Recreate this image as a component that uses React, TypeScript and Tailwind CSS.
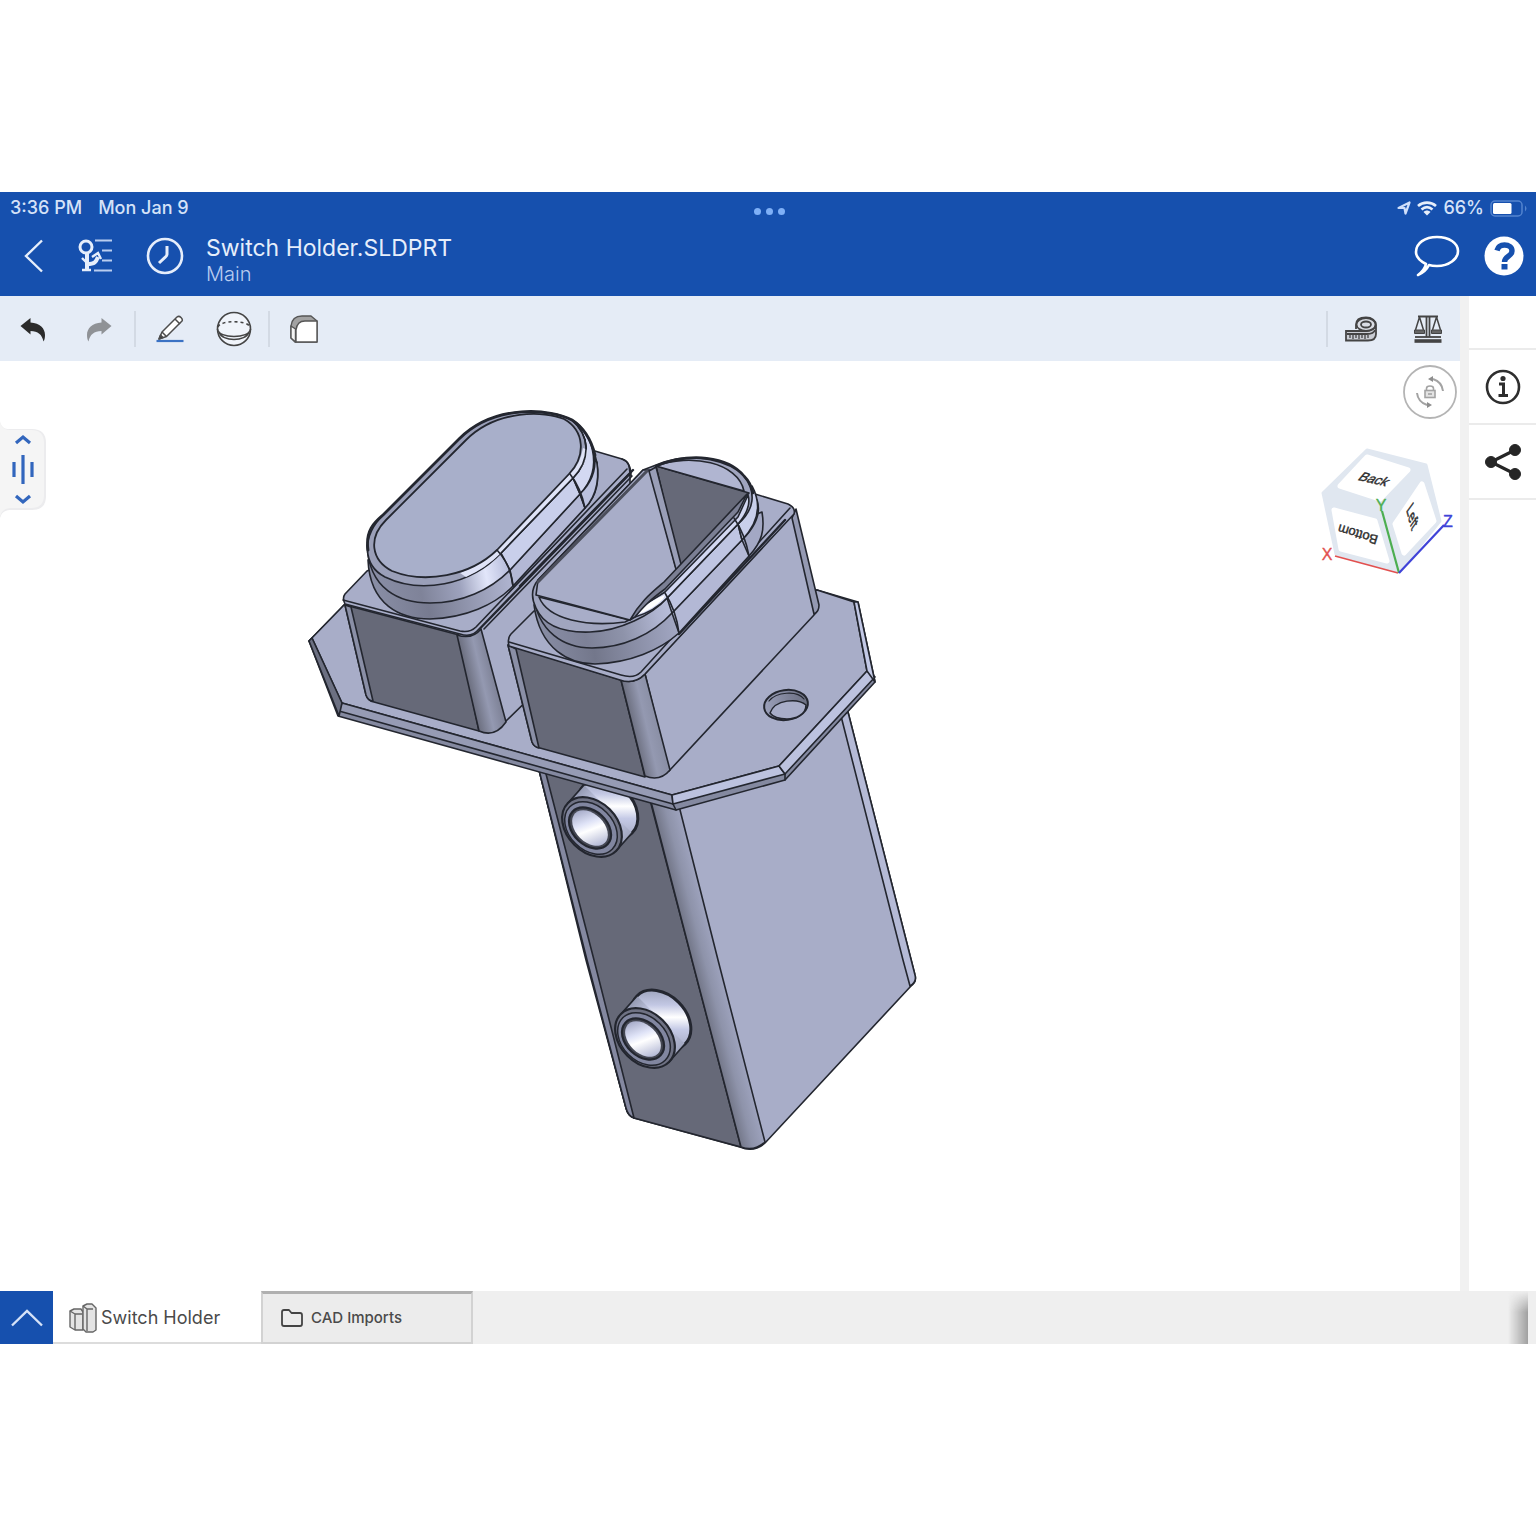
import * as React from "react";

const EDGE = "#23262f";

// ─── Header icons ─────────────────────────────────────────────────────────────
function BackIcon() {
    return (
        <svg width="20" height="34" viewBox="0 0 20 34" fill="none" stroke="#e6eefb" strokeWidth="2.4">
            <path d="M18 1.500L2 17L18 32.500" />
        </svg>
    );
}

function FeatureTreeIcon() {
    return (
        <svg width="36" height="34" viewBox="0 0 36 34" fill="none" stroke="#e6eefb">
            <circle cx="8" cy="8" r="6" strokeWidth="3" />
            <path d="M9 14V31M9 25C17 25 18 23 20 18" strokeWidth="4" />
            <path d="M4 19L9 24M14 18L20 14L23 20M4 31H13" strokeWidth="2.400" />
            <path d="M17 1.500H34M24 11.500H34M24 21.500H34M16 31.500H34" strokeWidth="1.800" stroke="#b9cdf0" />
        </svg>
    );
}

function HistoryIcon() {
    return (
        <svg width="38" height="38" viewBox="0 0 38 38" fill="none" stroke="#e6eefb" strokeWidth="2.6">
            <circle cx="19" cy="19" r="17" />
            <path d="M21 9V17Q21 19 19.500 20L13 26" strokeWidth="3" />
        </svg>
    );
}

function CommentIcon() {
    return (
        <svg width="46" height="42" viewBox="0 0 46 42" fill="none" stroke="#fff" strokeWidth="2.6" strokeLinejoin="round">
            <path d="M4 40C8 37 11 34 12 29C6 26 2 22 2 17C2 8 11 2 23 2S44 8 44 16S35 31 23 31C20 31 18 31 15 30C13 34 9 38 4 40Z" />
        </svg>
    );
}

function HelpIcon() {
    return (
        <svg width="40" height="40" viewBox="0 0 40 40">
            <circle cx="20" cy="20" r="19.500" fill="#fff" />
            <path d="M13 14.500C14 10.500 17 9 20.500 9C25 9 28 11.500 28 15C28 20.500 20.500 20 20.500 26" fill="none" stroke="#1650ae" strokeWidth="5.400" />
            <rect x="17.500" y="28" width="6" height="5.500" fill="#1650ae" />
        </svg>
    );
}

function LocationIcon() {
    return (
        <svg width="14" height="14" viewBox="0 0 14 14" fill="none" stroke="#cfdefa" strokeWidth="2.200" strokeLinejoin="round">
            <path d="M1.500 7L12.500 1.500L8.500 12.500L7.500 7Z" />
        </svg>
    );
}

function WifiIcon() {
    return (
        <svg width="20" height="15" viewBox="0 0 20 15" fill="none" stroke="#e6eefb" strokeWidth="2.600">
            <path d="M1 5C6 0.500 14 0.500 19 5M4.500 8.500C8 5.500 12 5.500 15.500 8.500" />
            <path d="M6.500 11C8.500 9 11.500 9 13.500 11L10 14.500Z" fill="#e6eefb" stroke="none" />
        </svg>
    );
}

function BatteryIcon() {
    return (
        <svg width="38" height="17" viewBox="0 0 38 17">
            <rect x="1" y="1" width="31" height="15" rx="4" fill="none" stroke="#5484cf" strokeWidth="1.500" />
            <rect x="3" y="3" width="18.500" height="11" rx="1.500" fill="#fff" />
            <path d="M35 5.500Q38 8.500 35 11.500Z" fill="#5484cf" />
        </svg>
    );
}

// ─── Toolbar icons ────────────────────────────────────────────────────────────
function UndoIcon({ color }: { color: string }) {
    return (
        <svg width="26" height="26" viewBox="0 0 26 26" fill={color}>
            <path d="M0.500 10L10.500 2V6.500C20 7 25 12.500 25 19C25 22 24.500 24 23.500 25.500C22 18.500 18 15 10.500 15V18.500Z" />
        </svg>
    );
}

function SketchIcon() {
    return (
        <svg width="28" height="28" viewBox="0 0 28 28" fill="none" stroke="#4d4d4d" strokeWidth="1.500" strokeLinejoin="round">
            <path d="M3 24L6 17L21 2Q23 0.500 25 2.500T26 6L10.500 21.500Z" fill="#fff" />
            <path d="M6 17L10.500 21.500M19 4L24 9" />
            <path d="M3 24L4.500 20L7 22.500Z" fill="#333" />
            <path d="M0.500 26H27.500" stroke="#3b72c4" strokeWidth="2.200" />
        </svg>
    );
}

function SphereIcon() {
    return (
        <svg width="36" height="36" viewBox="0 0 36 36" fill="none" stroke="#454545" strokeWidth="1.600">
            <circle cx="18" cy="18" r="16.500" fill="#f0f4fa" />
            <path d="M1.500 18C2 28 34 28 34.500 18M3 21C6 31 30 31 33 21" />
            <path d="M2 16C4 9 32 9 34 16" strokeDasharray="3 3" />
        </svg>
    );
}

function SheetIcon() {
    return (
        <svg width="28" height="28" viewBox="0 0 28 28" stroke="#555" strokeWidth="1.400" strokeLinejoin="round">
            <path d="M1 11Q2 1 12 1H21L27 6V27H5L1 23Z" fill="#a2a2a2" />
            <path d="M1 11L5.500 14V27L1 23Z" fill="#f4f4f4" />
            <path d="M6 27V15Q7 6 15 6H27V27Z" fill="#fff" />
        </svg>
    );
}

function TapeIcon() {
    return (
        <svg width="34" height="26" viewBox="0 0 34 26" fill="none" stroke="#444" strokeWidth="1.800">
            <path d="M12 13V9C12 4 16 1.500 22 1.500S32 5 32 9V18C32 22 29 24.500 24 24.500H2V15H22C27 15 32 12 32 9" fill="#c9ccd3" />
            <ellipse cx="22" cy="8.500" rx="9.500" ry="6.500" fill="#d9dce3" />
            <ellipse cx="22" cy="8.500" rx="5" ry="3" />
            <path d="M3 18H23C27 18 30 17 31 14" />
            <path d="M6 19V22M9 19V23M12 19V22M15 19V23M18 19V22M21 19V23M24 19V22" strokeWidth="1.300" />
        </svg>
    );
}

function ScaleIcon() {
    return (
        <svg width="28" height="28" viewBox="0 0 28 28" fill="none" stroke="#444" strokeWidth="1.500">
            <path d="M4 1.500H24M12.500 1V22M15.500 1V22" strokeWidth="1.800" />
            <path d="M5.500 2L1.500 15M5.500 2L9.500 15M22.500 2L18.500 15M22.500 2L26.500 15" />
            <path d="M0.500 15H10.500V18.500H0.500ZM17.500 15H27.500V18.500H17.500Z" fill="#666" strokeWidth="1" />
            <path d="M1 22H27" strokeWidth="1.800" />
            <path d="M0.500 26H27.500" strokeWidth="3.600" />
        </svg>
    );
}

// ─── Canvas widgets ───────────────────────────────────────────────────────────
function RotateLockIcon() {
    return (
        <svg width="54" height="54" viewBox="0 0 54 54" fill="none" stroke="#a3a3a3" strokeWidth="1.600">
            <circle cx="27" cy="27" r="26" fill="#fff" stroke="#b4b4b4" strokeWidth="1.800" />
            <path d="M30 14Q39 17 40 26M14 28Q15 37 24 40" strokeWidth="2" />
            <path d="M25 14L30 11V17ZM29 40L24 37V43Z" fill="#8e8e8e" stroke="none" />
            <path d="M23.500 26V23.500Q23.500 21 27 21T30.500 23.500V26" />
            <rect x="22" y="25.500" width="10" height="7" fill="#e4e4e4" />
            <path d="M25 29H29" />
        </svg>
    );
}

function ViewCube() {
    return (
        <svg
            width="144" height="138" viewBox="1316 444 144 138"
            fontFamily='"Liberation Sans", Arial, sans-serif'
            strokeLinejoin="round"
        >
            <path d="M1367 450L1426 465L1440 521L1399 572L1336 554L1323 493Z" fill="#e0e7f0" stroke="#e0e7f0" strokeWidth="3" />
            <g fill="#fff" stroke="#fff" strokeWidth="5">
                <path d="M1367 457L1408 470L1380 499L1340 486Z" />
                <path d="M1334 510L1375 521L1387 561L1341 549Z" />
                <path d="M1422 484L1434 521L1404 553L1395 524Z" />
            </g>
            <g fill="#2e2e2e" stroke="#2e2e2e" strokeWidth="0.400" fontSize="13">
                <text transform="translate(1371 483) rotate(13) skewX(-28)" textAnchor="middle">Back</text>
                <text transform="translate(1359 530) rotate(197) skewX(0)" textAnchor="middle">Bottom</text>
                <text transform="translate(1409 521) rotate(75) skewX(39)" textAnchor="middle">Left</text>
            </g>
            <path d="M1398 573L1335 556" stroke="#e2504f" strokeWidth="1.800" />
            <path d="M1399 573L1382 511" stroke="#4cae50" strokeWidth="2.200" />
            <path d="M1399 573L1444 525" stroke="#3f43d8" strokeWidth="2.200" />
            <g fontSize="16" textAnchor="middle">
                <text x="1327" y="560" fill="#e2504f" stroke="#e2504f" strokeWidth="0.400">X</text>
                <text x="1381" y="511" fill="#4cae50" stroke="#4cae50" strokeWidth="0.400">Y</text>
                <text x="1448" y="527" fill="#3f43d8" stroke="#3f43d8" strokeWidth="0.400">Z</text>
            </g>
        </svg>
    );
}

function SideHandle() {
    return (
        <button type="button" aria-label="Show feature list" className="block">
            <svg width="48" height="98" viewBox="0 0 48 98" fill="none">
                <path d="M0 1C2 8 6 8 12 8H32Q46 8 46 22V75Q46 89 32 89H12C6 89 2 90 0 97Z" fill="#ececee" />
                <path d="M0 0C1 8 6 9 12 9H31Q44 9 44 22V74Q44 87 31 87H12C6 87 1 89 0 97Z" fill="#f5f5f5" />
                <g stroke="#3266bd" strokeWidth="3.200">
                    <path d="M16 22L23 16L30 22M16 75L23 81L30 75" />
                    <path d="M14 41V56M23 34V63M32 41V56" />
                </g>
            </svg>
        </button>
    );
}

// ─── CAD model ────────────────────────────────────────────────────────────────
function Boss({ x, y }: { x: number; y: number }) {
    return (
        <g transform={`translate(${x} ${y})`} stroke={EDGE} strokeWidth="1.800">
            <ellipse rx="34" ry="25" transform="translate(16 -18) rotate(45)" fill="url(#barrel)" strokeWidth="3" />
            <path d="M-24 -24L-8 -42L40 6L24 24Z" fill="url(#barrel)" stroke="none" />
            <path d="M-24 -24L-8 -42M24 24L40 6" />
            <ellipse rx="34" ry="25" transform="rotate(45)" fill="#6f7284" strokeWidth="2.200" />
            <ellipse rx="30" ry="22" transform="translate(-1 1) rotate(45)" fill="#8186a0" strokeWidth="1.500" />
            <ellipse rx="24" ry="17" transform="translate(-2 1) rotate(43)" fill="#444753" strokeWidth="2.200" />
            <ellipse rx="21" ry="14" transform="translate(-2 1) rotate(45)" fill="url(#bore)" stroke="none" />
        </g>
    );
}

function Model() {
    return (
        <svg className="block h-full w-full" viewBox="0 361 1460 930" role="img" aria-label="Switch Holder part">
            <defs>
                <linearGradient id="barrel" gradientUnits="userSpaceOnUse" x1="-16" y1="-34" x2="32" y2="14">
                    <stop offset="0" stopColor="#9298b0" />
                    <stop offset="0.300" stopColor="#c3c8e4" />
                    <stop offset="0.480" stopColor="#ffffff" />
                    <stop offset="0.660" stopColor="#c5cae6" />
                    <stop offset="1" stopColor="#a0a5be" />
                </linearGradient>
                <linearGradient id="bore" gradientUnits="userSpaceOnUse" x1="-18" y1="-8" x2="18" y2="8">
                    <stop offset="0" stopColor="#a9aecb" />
                    <stop offset="0.350" stopColor="#dfe3f7" />
                    <stop offset="0.550" stopColor="#ffffff" />
                    <stop offset="1" stopColor="#b5bad6" />
                </linearGradient>
                <linearGradient id="postFillet" gradientUnits="userSpaceOnUse" x1="671" y1="900" x2="702" y2="892">
                    <stop offset="0" stopColor="#666978" />
                    <stop offset="0.550" stopColor="#8e93aa" />
                    <stop offset="1" stopColor="#9fa4bf" />
                </linearGradient>
                <linearGradient id="leftFillet" gradientUnits="userSpaceOnUse" x1="468" y1="683" x2="494" y2="677">
                    <stop offset="0" stopColor="#6b6e7e" />
                    <stop offset="0.550" stopColor="#9499b1" />
                    <stop offset="1" stopColor="#7f8398" />
                </linearGradient>
                <linearGradient id="rightFillet" gradientUnits="userSpaceOnUse" x1="632" y1="728" x2="658" y2="722">
                    <stop offset="0" stopColor="#6b6e7e" />
                    <stop offset="0.550" stopColor="#9499b1" />
                    <stop offset="1" stopColor="#8a8fa5" />
                </linearGradient>
                <linearGradient id="wallLeft" gradientUnits="userSpaceOnUse" x1="367" y1="600" x2="520" y2="570">
                    <stop offset="0" stopColor="#8b90a8" />
                    <stop offset="0.350" stopColor="#7f8399" />
                    <stop offset="0.600" stopColor="#9da2bd" />
                    <stop offset="0.780" stopColor="#e2e6fa" />
                    <stop offset="0.920" stopColor="#b9bfdd" />
                    <stop offset="1" stopColor="#c6cce8" />
                </linearGradient>
                <linearGradient id="wallRight" gradientUnits="userSpaceOnUse" x1="533" y1="645" x2="680" y2="610">
                    <stop offset="0" stopColor="#8b90a8" />
                    <stop offset="0.350" stopColor="#7d8197" />
                    <stop offset="0.600" stopColor="#8e93aa" />
                    <stop offset="0.850" stopColor="#b0b5d1" />
                    <stop offset="1" stopColor="#bcc2df" />
                </linearGradient>
                <linearGradient id="skirtLeft" gradientUnits="userSpaceOnUse" x1="370" y1="610" x2="515" y2="590">
                    <stop offset="0" stopColor="#8b90a8" />
                    <stop offset="0.400" stopColor="#777b90" />
                    <stop offset="1" stopColor="#b0b5d1" />
                </linearGradient>
                <linearGradient id="skirtRight" gradientUnits="userSpaceOnUse" x1="535" y1="650" x2="680" y2="630">
                    <stop offset="0" stopColor="#8b90a8" />
                    <stop offset="0.400" stopColor="#73778b" />
                    <stop offset="1" stopColor="#a3a8c4" />
                </linearGradient>
                <linearGradient id="hole" gradientUnits="userSpaceOnUse" x1="765" y1="0" x2="808" y2="0">
                    <stop offset="0" stopColor="#9ba0ba" />
                    <stop offset="0.600" stopColor="#7c8096" />
                    <stop offset="1" stopColor="#6c7082" />
                </linearGradient>
            </defs>

            <g stroke={EDGE} strokeWidth="1.600" strokeLinejoin="round" strokeLinecap="round">
                {/* Post */}
                <path d="M539 770L586 960L626 1108Q628 1116 634 1118L740 1147Q754 1153 765 1143L911 986Q917 982 915 975L848 712L700 760Z" fill="#a8adc8" />
                <path d="M539 770L587 960L626 1108Q628 1116 634 1118L741 1147L692 960L650 800Z" fill="#666978" />
                <path d="M539 770L587 960L626 1108Q628 1116 634 1118L594 960L545 770Z" fill="#8488a0" />
                <path d="M650 798L692 960L741 1147Q754 1152 765 1142L718 960L677 798Z" fill="url(#postFillet)" />
                <path d="M848 712L915 975Q917 982 910 986L903 960L841 716Z" fill="#b5bad6" />

                <Boss x={592} y={827} />
                <Boss x={645} y={1038} />

                {/* Flange */}
                <path d="M309 641L345 604L817 590L858 602L875 682L785 780L676 810L338 716Z" fill="#8489a0" />
                <path d="M309 641L345 604L817 590L854 602L867 671L779 766L672 795L342 703L312 638Z" fill="#a8adc8" />
                <path d="M342 703L672 795L673 804L339 711Z" fill="#969bb4" />
                <path d="M672 795L779 766L785 774L673 804Z" fill="#bcc2df" />
                <path d="M779 766L867 671L875 677L785 774Z" fill="#bcc2df" />
                <path d="M854 602L858 602L875 682L867 671Z" fill="#c3c9e6" />
                <path d="M309 641L312 638L342 703L339 716Z" fill="#6c7082" />
                <path d="M673 804L676 810M785 774V780" />
                <ellipse cx="786" cy="705" rx="22" ry="15" transform="rotate(-8 786 705)" fill="url(#hole)" strokeWidth="2" />
                <path d="M770 713C775 699 798 698 806 705C806 715 795 719 787 719C779 719 773 717 770 713Z" fill="#a8adc8" strokeWidth="1.500" />
                <path d="M769 701C776 692 797 690 804 699" fill="none" strokeWidth="1.200" />

                {/* Left box */}
                <path d="M480 629L630 474V600L505 722Z" fill="#a8adc8" />
                <path d="M345 605L459 635L479 731L374 702Q368 701 366 695Z" fill="#666978" />
                <path d="M345 605L351 607L373 701Q368 701 366 695Z" fill="#8a8fa6" />
                <path d="M457 635L479 731Q495 738 506 722L481 629Q472 640 457 635Z" fill="url(#leftFillet)" />
                <path d="M367 571L345 594Q342 598 345 604L460 634Q472 638 479 629L630 473L629 466Q628 461 622 459L588 449L480 520Z" fill="#a8adc8" />
                <path d="M343 600L460 631Q470 633 476 627L627 469" fill="none" />
                <path d="M484 629L632 476M622 459Q631 462 631 476" fill="none" />
                <path d="M520 586L633 470" fill="none" strokeWidth="2.400" />

                {/* Left cap */}
                <path d="M368 560C370 605 400 619 430 619C465 618 495 605 513 586L585 508C598 494 599 480 597 462L440 480Z" fill="url(#skirtLeft)" />
                <path d="M367 545C369 590 400 603 430 603C462 603 490 590 510 570L580 494C592 482 598 465 592 446L440 480Z" fill="url(#wallLeft)" />
                <path d="M510 570L580 494L585 508L513 586Z" fill="#b3b8d5" />
                <path d="M501 553L573 478L580 494L510 570Z" fill="#c9cfeb" />
                <path d="M573 478C592 458 589 435 572 420C590 430 606 466 580 494Z" fill="#d3d8f2" />
                <path d="M580 494C591 483 596 472 595 455C601 475 597 496 585 508Z" fill="#bcc2df" />
                <path d="M501 553L573 478C592 458 589 435 572 420C552 409 495 403 459 439L383 515C362 536 362 565 385 577C420 594 470 586 501 553Z" fill="#9a9fb8" />
                <path d="M460 573Q484 564 497 549L570 474Q580 465 583 448L588 450Q587 463 573 478L501 553Q486 568 466 577Z" fill="#dfe3f7" stroke="none" />
                <path d="M501 553L573 478C592 458 589 435 572 420" fill="none" />
                <path d="M497 550L569 474C586 456 585 431 564 419C545 411 497 409 466 440L386 520C368 538 371 560 392 571C425 584 470 576 497 550Z" fill="#a8afca" strokeWidth="1.800" />
                <path d="M368 550C365 530 375 522 383 515L459 439C495 403 552 409 572 420Q589 431 595 455" fill="none" strokeWidth="2.800" />
                <path d="M497 550Q511 565 513 586M570 474Q581 488 585 508" fill="none" />

                {/* Right box */}
                <path d="M645 674L794 512L817 606Q818 611 814 615L669 771Z" fill="#a8adc8" />
                <path d="M792 518L796 509L819 605Q819 612 814 614Z" fill="#9499b2" />
                <path d="M508 645L621 680L645 777L540 748Q534 747 532 742Z" fill="#666978" />
                <path d="M508 645L516 649L539 748Q534 747 532 742Z" fill="#8a8fa6" />
                <path d="M621 680L645 776Q660 782 670 770L645 674Q635 685 621 680Z" fill="url(#rightFillet)" />
                <path d="M534 611L511 634Q507 638 509 646L620 680Q634 685 645 674L794 514Q796 508 788 504L755 494L600 600Z" fill="#a8adc8" />
                <path d="M509 642L621 675Q634 679 641 672L790 508" fill="none" />
                <path d="M679 634L749 559L785 520" fill="none" strokeWidth="2.400" />

                {/* Right cap */}
                <path d="M534 605C540 650 570 664 595 664C630 663 660 650 679 633L749 556C762 542 765 530 762 512L640 560Z" fill="url(#skirtRight)" />
                <path d="M533 592C537 633 565 648 592 648C622 648 652 635 672 613L742 540C756 526 761 512 757 500L640 560Z" fill="url(#wallRight)" />
                <path d="M672 613L742 540L749 556L679 633Z" fill="#b3b8d5" />
                <path d="M667 598L738 524L742 540L672 613Z" fill="#bfc5e2" />
                <path d="M738 524Q752 510 752 486Q767 514 742 540Z" fill="#c9cfeb" />
                <path d="M643 470L538 580C530 590 532 600 536 608C543 624 560 633 590 632C620 631 652 615 667 598L738 524C754 510 757 493 744 476C730 461 695 452 664 462Z" fill="#a0a5bf" />
                <path d="M539 597C548 620 588 627 625 622L629 620Z" fill="#a8adc8" />
                <path d="M643 470L538 580L536 595L630 620L677 572L650 470Z" fill="#a8adc8" />
                <path d="M538 582L647 471" fill="none" strokeWidth="3" stroke="#4b4e5b" />
                <path d="M656 466L749 493L680 569Z" fill="#666978" />
                <path d="M649 471L656 467L682 568L677 573Z" fill="#999eb7" />
                <path d="M656 466C690 453 738 462 744 491Z" fill="#b0b5d1" />
                <path d="M635 617C641 605 650 602 665 592L738 517L748 495Q752 508 738 524L667 598Q655 611 635 617Z" fill="#d3d8f2" />
                <path d="M638 614Q648 601 665 595L663 599Q652 610 638 614Z" fill="#fff" stroke="none" />
                <path d="M630 620C640 602 650 594 664 582L747 494L738 512L665 589C650 600 644 606 635 617Z" fill="#7b7f94" />
                <path d="M656 466C690 452 728 456 744 476Q751 483 753 493" fill="none" strokeWidth="2.600" />
                <path d="M665 593Q676 610 679 633M734 518Q745 534 749 556" fill="none" />
            </g>
        </svg>
    );
}

// ─── Tab bar icons ────────────────────────────────────────────────────────────
function PartIcon() {
    return (
        <svg width="28" height="30" viewBox="0 0 28 30" fill="#e4e4e4" stroke="#666" strokeWidth="1.400" strokeLinejoin="round">
            <path d="M1 8L5 6H12L14 9V27H6L1 24Z" />
            <path d="M1 8L6 11H13M6 11V27" fill="none" />
            <path d="M14 3L18 1H23L27 5V27L24 29H17L14 26Z" />
            <path d="M14 3L18 6V28M18 6H24" fill="none" />
        </svg>
    );
}

function FolderIcon() {
    return (
        <svg width="22" height="18" viewBox="0 0 22 18" fill="none" stroke="#444" strokeWidth="1.800" strokeLinejoin="round">
            <path d="M1 15V3Q1 1 3 1H8L10.500 4H19Q21 4 21 6V15Q21 17 19 17H3Q1 17 1 15Z" />
        </svg>
    );
}

function Divider() {
    return <div className="h-9 w-0.5 bg-[#d3dae4]" />;
}

export default function App() {
    return (
        <div className="flex min-h-screen flex-col justify-center bg-white font-['Inter',sans-serif]">
            <div className="flex aspect-[4/3] w-full flex-col overflow-hidden">
                <header className="bg-[#1650ae] text-[#e6eefb]">
                    {/* Status bar */}
                    <div className="grid h-8 grid-cols-3 items-center pr-2 pl-2.5 text-[18px] leading-5 font-medium text-[#d5e2f8]">
                        <div className="flex gap-4">
                            <span>3:36 PM</span>
                            <span>Mon Jan 9</span>
                        </div>
                        <div className="flex justify-center gap-[5px] pt-1.5">
                            <span className="size-[7px] rounded-full bg-[#7fb0f7]" />
                            <span className="size-[7px] rounded-full bg-[#7fb0f7]" />
                            <span className="size-[7px] rounded-full bg-[#7fb0f7]" />
                        </div>
                        <div className="flex items-center justify-end gap-1.5">
                            <LocationIcon />
                            <WifiIcon />
                            <span>66%</span>
                            <BatteryIcon />
                        </div>
                    </div>

                    {/* Document bar */}
                    <div className="flex h-18 items-start pt-3 pr-3 pl-6">
                        <div className="flex h-10 items-center">
                            <button type="button" aria-label="Back"><BackIcon /></button>
                            <button type="button" aria-label="Feature tree" className="ml-8.5"><FeatureTreeIcon /></button>
                            <button type="button" aria-label="History" className="ml-8"><HistoryIcon /></button>
                        </div>
                        <div className="ml-5.5">
                            <h1 className="text-[23px] leading-6">Switch Holder.SLDPRT</h1>
                            <p className="text-[20px] leading-7 font-light text-[#b9cdf0]">Main</p>
                        </div>
                        <div className="ml-auto flex h-10 items-center gap-6">
                            <button type="button" aria-label="Comments"><CommentIcon /></button>
                            <button type="button" aria-label="Help"><HelpIcon /></button>
                        </div>
                    </div>
                </header>

                <div className="flex min-h-0 flex-1">
                    <div className="flex min-w-0 flex-1 flex-col">
                        {/* Toolbar */}
                        <div className="flex h-[65px] shrink-0 items-center bg-[#e5ecf6] pr-4.5 pl-5">
                            <button type="button" aria-label="Undo"><UndoIcon color="#2b2b2b" /></button>
                            <button type="button" aria-label="Redo" className="mr-5.5 ml-10 -scale-x-100"><UndoIcon color="#8f9296" /></button>
                            <Divider />
                            <button type="button" aria-label="Sketch" className="ml-5"><SketchIcon /></button>
                            <button type="button" aria-label="Solid" className="mr-4 ml-8"><SphereIcon /></button>
                            <Divider />
                            <button type="button" aria-label="Sheet" className="ml-5"><SheetIcon /></button>
                            <div className="ml-auto flex items-center">
                                <Divider />
                                <button type="button" aria-label="Measure" className="ml-4"><TapeIcon /></button>
                                <button type="button" aria-label="Mass properties" className="ml-9"><ScaleIcon /></button>
                            </div>
                        </div>

                        {/* Canvas */}
                        <div className="relative min-h-0 flex-1">
                            <Model />
                            <div className="absolute top-15 left-0"><SideHandle /></div>
                            <button type="button" aria-label="Lock rotation" className="absolute top-1 right-[3px]"><RotateLockIcon /></button>
                            <div className="absolute top-[83px] right-0"><ViewCube /></div>
                        </div>
                    </div>

                    {/* Side panel */}
                    <aside className="flex w-19 shrink-0 flex-col border-l-[9px] border-[#f1f1f1]">
                        <div className="h-[54px] border-b-2 border-[#ebebeb]" />
                        <button type="button" aria-label="Details" className="flex h-[75px] items-center justify-center border-b-2 border-[#ebebeb]">
                            <svg width="36" height="36" viewBox="0 0 36 36" fill="none" stroke="#2e2e2e">
                                <circle cx="18" cy="18" r="16" strokeWidth="2.600" />
                                <path d="M14 15H18.500V26M13.500 26.500H23" strokeWidth="3" />
                                <circle cx="18" cy="9.500" r="2.600" fill="#2e2e2e" stroke="none" />
                            </svg>
                        </button>
                        <button type="button" aria-label="Share" className="flex h-[75px] items-center justify-center border-b-2 border-[#ebebeb]">
                            <svg width="36" height="36" viewBox="0 0 36 36" fill="#262626" stroke="#262626">
                                <path d="M30 6L6 18L30 30" fill="none" strokeWidth="3.200" />
                                <circle cx="6" cy="18" r="5.500" />
                                <circle cx="30" cy="6" r="5.500" />
                                <circle cx="30" cy="30" r="5.500" />
                            </svg>
                        </button>
                    </aside>
                </div>

                {/* Tab bar */}
                <nav className="relative flex h-[53px] shrink-0 bg-[#efefef] text-[#4a4a4a]">
                    <button type="button" aria-label="Expand tabs" className="flex w-[53px] items-center justify-center bg-[#1650ae]">
                        <svg width="32" height="18" viewBox="0 0 32 18" fill="none" stroke="#d5e2f8" strokeWidth="2.400">
                            <path d="M1 16.500L16 2L31 16.500" />
                        </svg>
                    </button>
                    <button type="button" className="flex w-52 items-center gap-1 border-b-2 border-[#dcdcdc] bg-white pt-0.5 pl-4 text-[18px]">
                        <PartIcon />
                        Switch Holder
                    </button>
                    <button type="button" className="flex w-[212px] items-center gap-2 border-2 border-t-[3px] border-[#d2d2d2] border-t-[#b0b0b0] bg-[#ececec] pl-4.5 text-[15px] font-medium">
                        <FolderIcon />
                        CAD Imports
                    </button>
                    <div className="absolute inset-y-0 right-2 w-5 bg-linear-to-r from-transparent to-[#a0a0a0] mask-t-from-60% mask-t-to-100%" />
                </nav>
            </div>
        </div>
    );
}
